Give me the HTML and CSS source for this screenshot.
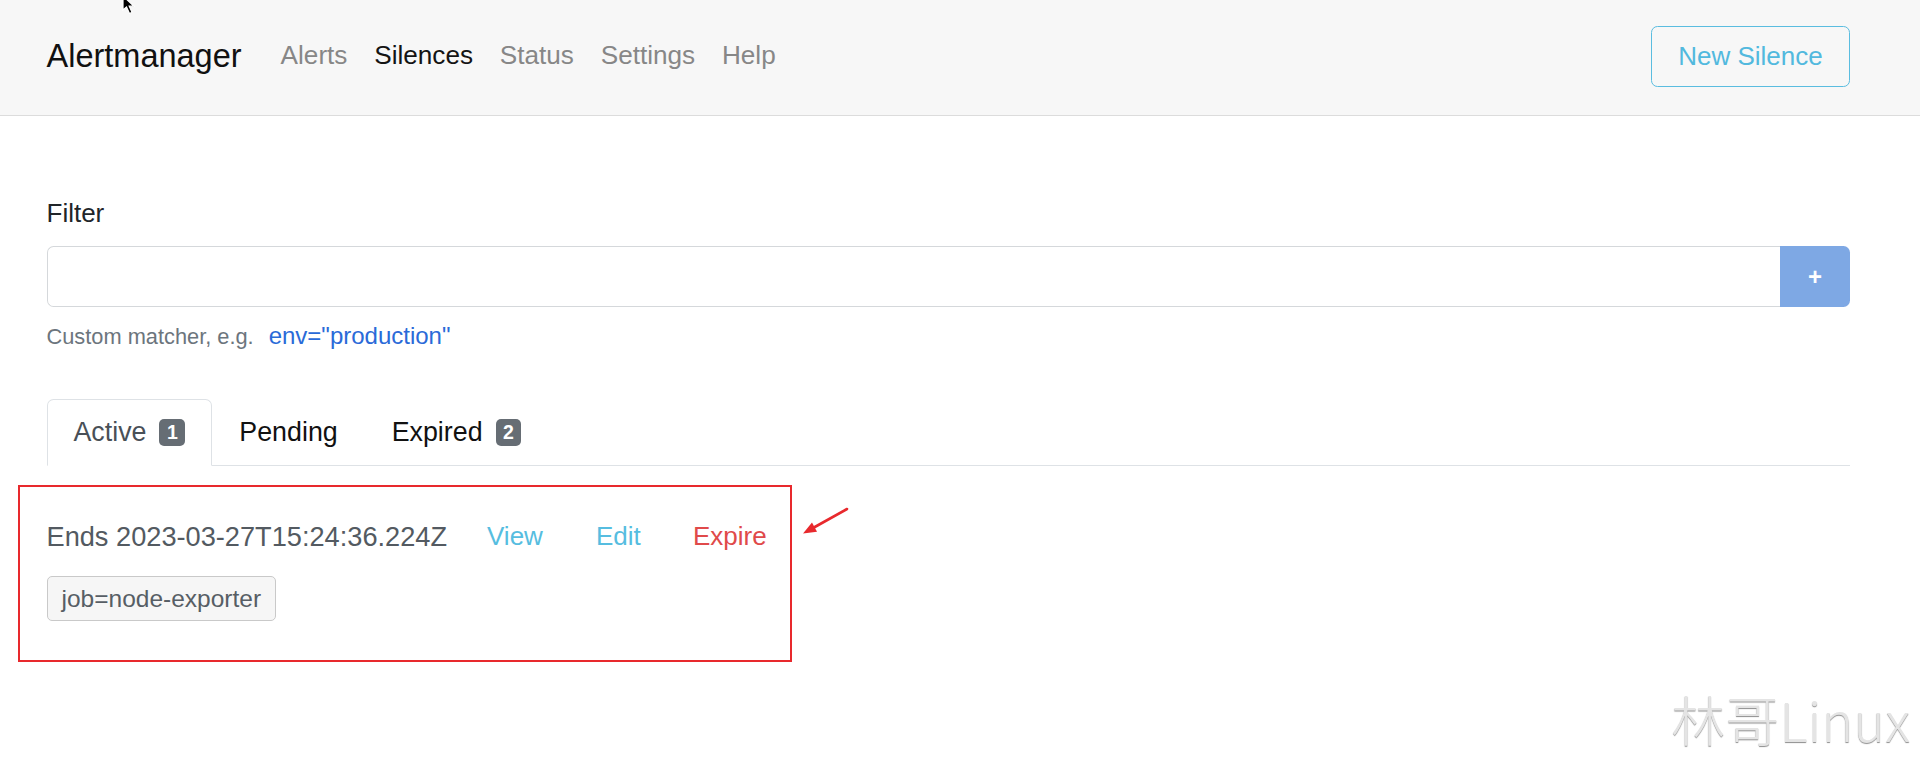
FILE: index.html
```html
<!DOCTYPE html>
<html lang="en">
<head>
<meta charset="utf-8">
<title>Alertmanager</title>
<link rel="stylesheet" href="styles.css">
</head>
<body>
<svg class="cursor" width="22" height="18" viewBox="0 0 22 18"><polygon points="1,-4 1,10 4.5,7 7.5,13.5 10,12.3 7.2,6.2 12,6.2" fill="#000" stroke="#fff" stroke-width="1.2"/></svg>
<header class="navbar">
  <div class="brand">Alertmanager</div>
  <nav class="nav">
    <a class="nav-link">Alerts</a>
    <a class="nav-link active">Silences</a>
    <a class="nav-link">Status</a>
    <a class="nav-link">Settings</a>
    <a class="nav-link">Help</a>
  </nav>
  <button class="btn-new">New Silence</button>
</header>
<main class="content">
  <label class="filter-label">Filter</label>
  <div class="input-group">
    <input class="filter-input" type="text">
    <button class="btn-add">+</button>
  </div>
  <div class="helper"><span>Custom matcher, e.g.</span><a class="example">env="production"</a></div>
  <ul class="tabs">
    <li class="tab active">Active<span class="badge">1</span></li>
    <li class="tab">Pending</li>
    <li class="tab">Expired<span class="badge">2</span></li>
  </ul>
  <div class="silence">
    <div class="silence-row">
      <span class="ends">Ends 2023-03-27T15:24:36.224Z</span>
      <a class="act view">View</a>
      <a class="act edit">Edit</a>
      <a class="act expire">Expire</a>
    </div>
    <div class="matchers"><span class="matcher">job=node-exporter</span></div>
    <svg class="arrow" width="56" height="40" viewBox="0 0 56 40"><line x1="50" y1="9" x2="16" y2="28" stroke="#e8292d" stroke-width="2.6" stroke-linecap="round"/><polygon points="6,33.5 20,31.8 15,22.5" fill="#e8292d"/></svg>
  </div>
</main>
<div class="watermark">林哥Linux</div>
</body>
</html>
```

FILE: styles.css
```css
* { box-sizing: border-box; }
html, body { margin: 0; padding: 0; }
body {
  font-family: "Liberation Sans", Arial, sans-serif;
  font-size: 26px;
  line-height: 1.5;
  color: #212529;
  background: #fff;
  width: 1920px;
  height: 758px;
  overflow: hidden;
  position: relative;
}
.cursor { position: absolute; left: 122px; top: 0; }
.navbar {
  display: flex;
  align-items: center;
  padding: 25.5px 70px 28.5px 46.5px;
  background: #f7f7f7;
  border-bottom: 1px solid #dcdcdc;
}
.brand {
  font-size: 32.5px;
  line-height: 1.5;
  color: #111;
  margin-right: 26px;
}
.nav { display: flex; flex: 1; }
.nav-link {
  padding: 0 13.4px;
  font-size: 26.15px;
  color: #878787;
  text-decoration: none;
}
.nav-link:first-child { padding-left: 13px; }
.nav-link.active { color: #141414; }
.btn-new {
  width: 199px;
  height: 61px;
  font-family: inherit;
  font-size: 26px;
  color: #52b9de;
  background: transparent;
  border: 1px solid #5bbde0;
  border-radius: 6.5px;
  padding: 0;
}
.content {
  padding: 78px 70px 0 46.5px;
}
.filter-label {
  display: block;
  line-height: 39px;
  margin-bottom: 13px;
  color: #212529;
}
.input-group { display: flex; height: 61px; }
.filter-input {
  flex: 1;
  height: 61px;
  border: 1px solid #d5d8db;
  border-right: none;
  border-radius: 6.5px 0 0 6.5px;
  font-family: inherit;
  font-size: 26px;
  padding: 0 19px;
  background: #fff;
}
.btn-add {
  width: 70px;
  height: 61px;
  border: none;
  background: #7ea8e4;
  color: #fff;
  font-family: inherit;
  font-size: 24px;
  font-weight: bold;
  border-radius: 0 6.5px 6.5px 0;
  padding: 0;
}
.helper {
  margin-top: 13px;
  font-size: 21.8px;
  line-height: 31px;
  color: #6c757d;
  display: flex;
  align-items: baseline;
}
.example {
  margin-left: 15px;
  font-size: 24px;
  color: #2a6ad8;
  text-decoration: none;
}
.tabs {
  list-style: none;
  margin: 47px 0 0;
  padding: 0;
  display: flex;
  border-bottom: 1px solid #dee2e6;
}
.tab {
  display: flex;
  align-items: center;
  height: 67px;
  padding: 0 26px;
  margin-bottom: -1px;
  font-size: 26.8px;
  border: 1px solid transparent;
  border-radius: 6.5px 6.5px 0 0;
  color: #111;
}
.tab.active {
  color: #495057;
  background: #fff;
  border-color: #dee2e6 #dee2e6 #fff;
}
.badge {
  margin-left: 13px;
  background: #666d74;
  color: #fff;
  font-size: 19.5px;
  font-weight: bold;
  line-height: 1;
  padding: 4px 7.5px;
  border-radius: 5px;
}
.silence {
  position: relative;
  width: 774px;
  margin: 19px 0 0 -28.5px;
  border: 2px solid #e8292d;
  padding: 29.5px 0 38.5px 26.5px;
}
.silence-row { display: flex; line-height: 39px; }
.ends { width: 440.5px; color: #535a61; font-size: 27.2px; }
.act { text-decoration: none; }
.view { width: 109px; color: #56bde0; }
.edit { width: 97px; color: #56bde0; }
.expire { color: #e04a4a; }
.matchers { margin-top: 20.5px; display: flex; }
.matcher {
  display: inline-block;
  height: 45px;
  line-height: 43px;
  padding: 0 14px;
  font-size: 24.5px;
  color: #575e65;
  background: #f6f6f6;
  border: 1px solid #c9c9c9;
  border-radius: 5px;
}
.arrow { position: absolute; left: 777px; top: 13px; }
.watermark {
  position: absolute;
  right: 10px;
  top: 692px;
  font-family: "Noto Sans CJK SC", "Noto Sans", sans-serif;
  font-weight: 300;
  font-size: 54px;
  line-height: 1;
  color: #e4e4e4;
  text-shadow: 0 1px 1px rgba(0,0,0,0.45), 0 -1px 0 rgba(255,255,255,0.9);
}
```
